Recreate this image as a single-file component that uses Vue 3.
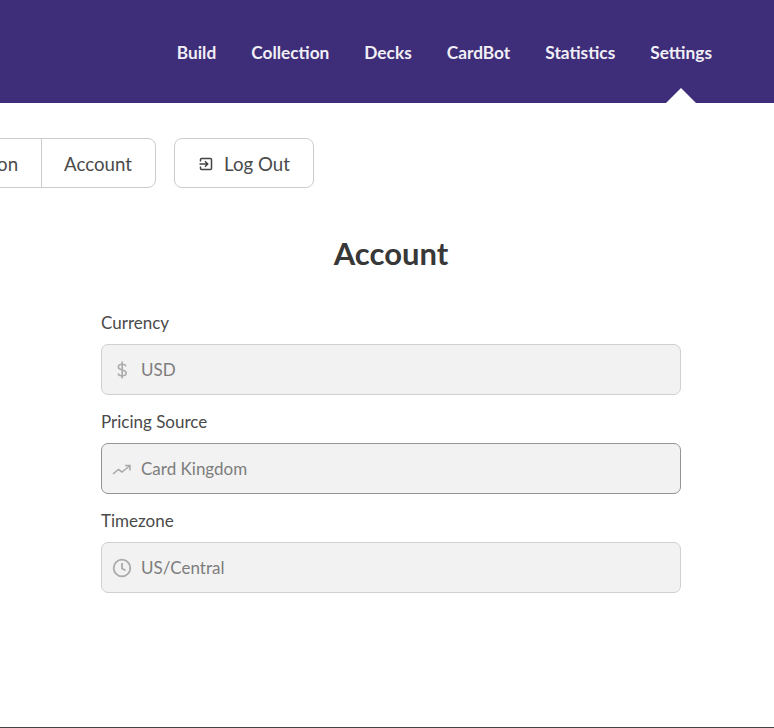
<script setup>
const navItems = ["Build", "Collection", "Decks", "CardBot", "Statistics", "Settings"];
</script>

<template>
  <div class="page">
    <header class="nav">
      <a v-for="item in navItems" :key="item" class="nav-link" :class="{ active: item === 'Settings' }">{{ item }}</a>
    </header>

    <div class="tabs">
      <div class="tab-group">
        <a class="tab">Collection</a>
        <a class="tab">Account</a>
      </div>
      <button class="logout">
        <svg width="16" height="16" viewBox="0 0 16 16" fill="none" stroke="#444" stroke-width="1.5">
          <path d="M2.500 5.500V3.500q0-1 1-1h9q1 0 1 1v9q0 1-1 1h-9q-1 0-1-1v-2" />
          <path d="M1.500 8h8M7 5.300 9.700 8 7 10.700" />
        </svg>
        Log Out
      </button>
    </div>

    <main class="account">
      <h1>Account</h1>

      <div class="field">
        <label>Currency</label>
        <div class="input">
          <div class="icon">
            <svg width="18" height="20" viewBox="0 0 18 20" fill="none" stroke="#aaa" stroke-width="1.600">
              <path d="M13 6.200C12.500 4.800 11 4.200 9.200 4.200 7 4.200 5.300 5.200 5.300 7c0 3.800 7.900 2 7.900 6 0 1.800-1.800 2.800-4 2.800-2 0-3.700-.8-4.200-2.400M9.200 1.500v17" />
            </svg>
          </div>
          <span>USD</span>
        </div>
      </div>

      <div class="field">
        <label>Pricing Source</label>
        <div class="input focused">
          <div class="icon">
            <svg width="20" height="18" viewBox="0 0 20 18" fill="none" stroke="#aaa" stroke-width="1.600">
              <path d="M1 14 6.500 9.500l3.500 2.500L17.500 6M13 5.500h5V10.500" />
            </svg>
          </div>
          <span>Card Kingdom</span>
        </div>
      </div>

      <div class="field">
        <label>Timezone</label>
        <div class="input">
          <div class="icon">
            <svg width="20" height="20" viewBox="0 0 20 20" fill="none" stroke="#aaa" stroke-width="1.800">
              <circle cx="10" cy="10" r="8.300" />
              <path d="M10 5v5.500l3.500 2" />
            </svg>
          </div>
          <span>US/Central</span>
        </div>
      </div>
    </main>
  </div>
</template>

<style>
html,
body {
  margin: 0;
  background: #fff;
}
</style>

<style scoped>
.page {
  height: 728px;
  box-sizing: border-box;
  border-bottom: 1px solid #444;
  overflow: hidden;
  font-family: Lato, "Open Sans", sans-serif;
  color: #4a4a4a;
}

.nav {
  height: 103px;
  background: #3e2d78;
  display: flex;
  align-items: center;
  justify-content: flex-end;
  gap: 35px;
  padding-right: 62px;
}

.nav-link {
  position: relative;
  top: 1px;
  color: #f1eff6;
  font-size: 17.300px;
  font-weight: 700;
}

.nav-link.active::after {
  content: "";
  position: absolute;
  left: 50%;
  bottom: -42px;
  margin-left: -17px;
  border-left: 17px solid transparent;
  border-right: 17px solid transparent;
  border-bottom: 17px solid #fff;
}

.tabs {
  display: flex;
  justify-content: flex-end;
  gap: 18px;
  margin-top: 35px;
  padding-right: 460px;
}

.tab-group {
  display: flex;
  flex: none;
  height: 50px;
  box-sizing: border-box;
  border: 1px solid #ccc;
  border-radius: 8px;
}

.tab {
  display: flex;
  align-items: center;
  padding: 1px 23px 0 22px;
  font-size: 18.700px;
}

.tab + .tab {
  border-left: 1px solid #ccc;
}

.logout {
  display: flex;
  align-items: center;
  gap: 10px;
  flex: none;
  width: 140px;
  height: 50px;
  box-sizing: border-box;
  justify-content: center;
  padding-top: 2px;
  background: #fff;
  border: 1px solid #ccc;
  border-radius: 8px;
  font-family: inherit;
  font-size: 18.700px;
  color: #4a4a4a;
}

.account {
  width: 580px;
  margin-left: 101px;
  padding-top: 47px;
}

h1 {
  margin: 0 0 41px;
  text-align: center;
  font-size: 31px;
  line-height: 36px;
  font-weight: 700;
  color: #383838;
}

.field {
  margin-bottom: 16px;
}

label {
  display: block;
  font-size: 17px;
  line-height: 22px;
  margin-bottom: 10px;
  color: #4a4a4a;
}

.input {
  display: flex;
  align-items: center;
  height: 51px;
  box-sizing: border-box;
  background: #f2f2f2;
  border: 1px solid #d0d0d0;
  border-radius: 7px;
  padding-left: 10px;
  font-size: 17px;
  color: #7d7d7d;
}

.input.focused {
  border-color: #949494;
}

.icon {
  display: flex;
  justify-content: center;
  flex: none;
  width: 20px;
  margin-right: 9px;
}
</style>
